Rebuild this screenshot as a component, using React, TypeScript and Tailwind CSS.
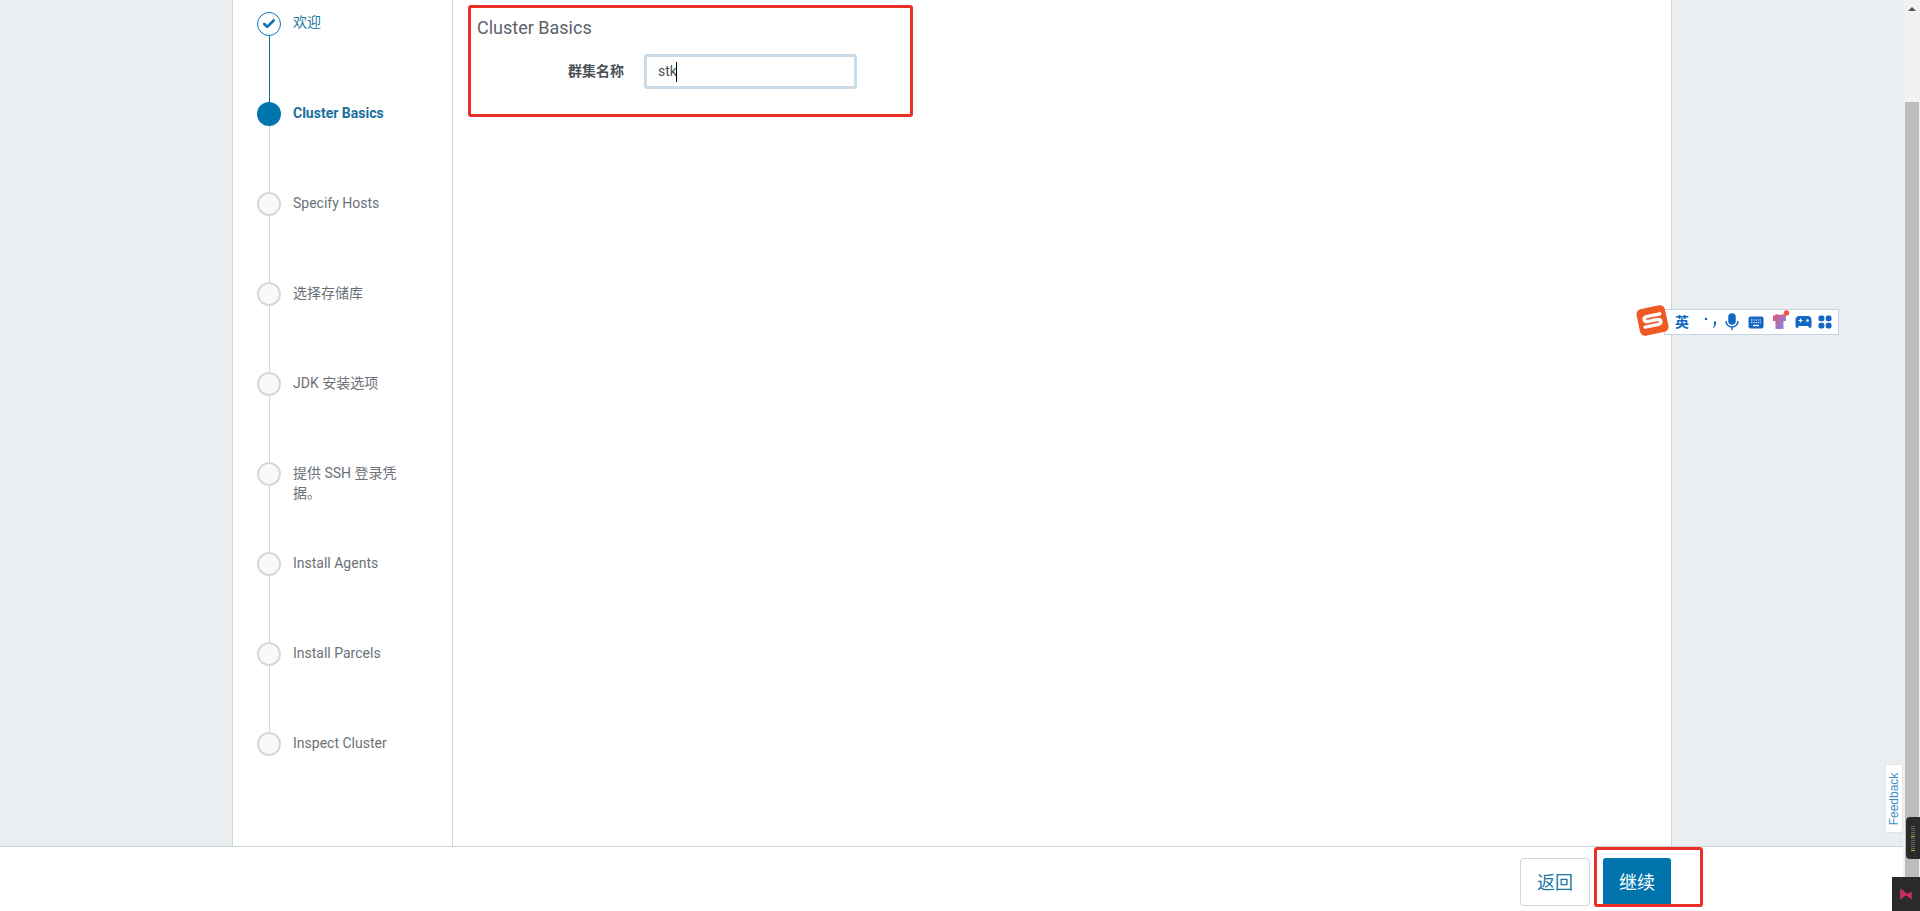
import React from 'react'
import { Check } from 'lucide-react'

const steps = [
  'Specify Hosts',
  '选择存储库',
  'JDK 安装选项',
  '提供 SSH 登录凭据。',
  'Install Agents',
  'Install Parcels',
  'Inspect Cluster',
]

const font = "font-['Roboto','Noto_Sans_CJK_SC',sans-serif]"

const SogouBar: React.FC = () => (
  <div className="absolute left-[1638px] top-[305px] flex h-[30px] items-center">
    <div className="z-10 flex h-[27px] w-[29px] -rotate-12 items-center justify-center rounded-[5px] bg-[#ef5a24]">
      <svg width="23" height="17" viewBox="0 0 23 17">
        <path d="M20 3.5H7.5Q3.5 3.5 3.5 6T7.5 8.500H15.500Q19.500 8.500 19.500 11T15.500 13.500H3" fill="none" stroke="#fff" strokeWidth="3.400" strokeLinecap="round" />
      </svg>
    </div>
    <div className="-ml-[3px] mt-[4px] flex h-[26px] w-[175px] items-center border border-[#c5d3e3] bg-white pl-[10px] text-[#1268c4]">
      <span className="w-[26px] text-[14px] leading-none font-bold">英</span>
      <svg className="ml-[2px]" width="14" height="14" viewBox="0 0 14 14" fill="#1268c4">
        <circle cx="3" cy="4" r="1.300" />
        <path d="M11 6.500h2.300q0 4-2.500 6.500l-.8-.5q1.300-1.700 1.300-3.500H11z" />
      </svg>
      <svg className="ml-[7px]" width="16" height="18" viewBox="0 0 16 18" fill="none" stroke="#1268c4" strokeWidth="1.500">
        <rect x="5" y="1" width="6" height="10" rx="3" fill="#1268c4" />
        <path d="M2 8a6 6 0 0 0 12 0M8 14v3" />
      </svg>
      <svg className="ml-[8px]" width="16" height="13" viewBox="0 0 16 13">
        <rect x="0.500" y="0.500" width="15" height="12" rx="2" fill="#1268c4" />
        <path d="M3 4h10M3 6.500h10" stroke="#fff" strokeWidth="1.200" strokeDasharray="1.300 1" />
        <path d="M5 9.500h6" stroke="#fff" strokeWidth="1.300" />
      </svg>
      <svg className="ml-[8px] -mt-[5px]" width="18" height="20" viewBox="0 0 18 20">
        <defs>
          <linearGradient id="shirt" x1="0" y1="0" x2="1" y2="1">
            <stop offset="0" stopColor="#e0566f" />
            <stop offset="1" stopColor="#7b8cf5" />
          </linearGradient>
        </defs>
        <path d="M1 6l4-2q3 2 6 0l3 2v5h-2.500v8h-8v-8H1z" fill="url(#shirt)" />
        <circle cx="14.500" cy="3" r="2.800" fill="#ef5a45" />
      </svg>
      <svg className="ml-[5px]" width="17" height="14" viewBox="0 0 17 14">
        <path d="M4 1h9q3.500 0 3.500 4.500V11q0 2-1.500 2-1 0-2-2H4q-1 2-2 2-1.500 0-1.500-2V5.500Q.5 1 4 1z" fill="#1268c4" />
        <path d="M3.500 5.500h4M5.500 3.500v4" stroke="#fff" strokeWidth="1.200" />
        <circle cx="12.500" cy="5.500" r="1.300" fill="#fff" />
      </svg>
      <svg className="ml-[6px]" width="14" height="14" viewBox="0 0 14 14" fill="#1268c4">
        <rect x="0.500" y="0.500" width="5.800" height="5.800" rx="2" />
        <rect x="7.700" y="0.500" width="5.800" height="5.800" rx="2" />
        <rect x="0.500" y="7.700" width="5.800" height="5.800" rx="2" />
        <rect x="7.700" y="7.700" width="5.800" height="5.800" rx="2" />
      </svg>
    </div>
  </div>
)

const App: React.FC = () => {
  return (
    <div className={`relative flex h-screen overflow-hidden bg-white ${font}`}>
      <div className="flex min-w-0 flex-1 flex-col">
        {/* Wizard body */}
        <div className="flex min-h-0 flex-1 bg-[#eaeef1] pl-[232px] pr-[231px]">
          <div className="flex flex-1 border-x border-[#cfd4d9] bg-white">
            <div className="w-[220px] shrink-0 border-r border-[#cfd4d9] pl-[24px] pt-[12px]">
              <div className="flex h-[90px]">
                <div className="flex w-[24px] flex-col items-center">
                  <div className="flex h-[24px] w-[24px] items-center justify-center rounded-full border border-[#0b76b0] bg-white">
                    <Check size={14} strokeWidth={4.5} className="text-[#0b76b0]" />
                  </div>
                  <div className="w-px flex-1 bg-[#0a6ea6]" />
                </div>
                <div className="ml-[12px] text-[14px] leading-[20px] text-[#1f77a5]">欢迎</div>
              </div>
              <div className="flex h-[90px]">
                <div className="flex w-[24px] flex-col items-center">
                  <div className="h-[24px] w-[24px] rounded-full bg-[#0075ad]" />
                  <div className="w-px flex-1 bg-[#cfd4d9]" />
                </div>
                <div className="ml-[12px] pt-[1px] text-[14px] leading-[20px] font-bold text-[#1a6f9e]">Cluster Basics</div>
              </div>
              {steps.map((step, i) => (
                <div key={step} className="flex h-[90px]">
                  <div className="flex w-[24px] flex-col items-center">
                    <div className="h-[24px] w-[24px] shrink-0 rounded-full border-2 border-[#d5d9dd] bg-[#f7f9fb]" />
                    {i < steps.length - 1 && <div className="w-px flex-1 bg-[#cfd4d9]" />}
                  </div>
                  <div className="ml-[12px] w-[110px] pt-[1px] text-[14px] leading-[20px] text-[#6b7177]">{step}</div>
                </div>
              ))}
            </div>

            <div className="flex-1 pl-[24px] pt-[16px]">
              <h2 className="text-[18px] leading-[24px] text-[#5c6268]">Cluster Basics</h2>
              <div className="mt-[14px] flex items-center">
                <label className="w-[167px] pr-[20px] text-right text-[14px] font-bold text-[#4a4f55]">群集名称</label>
                <div className="flex h-[35px] w-[213px] items-center rounded-[3px] border-[3px] border-[#c9dbe6] bg-white pl-[11px] text-[14px] text-[#4a4f55]">
                  stk<span className="-ml-[1px] h-[20px] w-px bg-black" />
                </div>
              </div>
            </div>
          </div>
        </div>

        {/* Footer buttons */}
        <div className="flex h-[65px] shrink-0 items-start justify-end gap-[13px] border-t border-[#cfd4d9] bg-white pr-[232px] pt-[11px]">
          <button className="h-[48px] w-[70px] rounded-[4px] border border-[#cfd4d9] bg-white text-[18px] text-[#1f77a5]">返回</button>
          <button className="h-[48px] w-[68px] rounded-[3px] bg-[#0075ad] text-[18px] text-white">继续</button>
        </div>
      </div>

      {/* Scrollbar */}
      <div className="flex w-[17px] shrink-0 flex-col items-center bg-[#f1f1f1] pt-[7px]">
        <div className="h-0 w-0 border-x-[4px] border-b-[4px] border-x-transparent border-b-[#505050]" />
        <div className="mt-[91px] h-[775px] w-[14px] bg-[#bcbcbc]" />
      </div>

      {/* Annotations */}
      <div className="absolute left-[468px] top-[5px] h-[112px] w-[445px] rounded-[3px] border-[3px] border-[#ea3026]" />
      <div className="absolute left-[1594px] top-[847px] h-[60px] w-[109px] rounded-[3px] border-[3px] border-[#ea3026]" />

      <SogouBar />

      {/* Feedback tab */}
      <div className="absolute left-[1885px] top-[764px] flex h-[69px] w-[18px] items-center justify-center border border-[#e3e6e9] bg-white pl-[1px]">
        <span className="-rotate-90 font-['Liberation_Sans',sans-serif] text-[12px] text-[#3a8fc4]">Feedback</span>
      </div>

      {/* Meter widget */}
      <div className="absolute left-[1906px] top-[817px] flex h-[42px] w-[14px] flex-col items-center justify-center gap-[1px] rounded-l-[4px] bg-[#2b2b2b]">
        {['#666', '#666', '#666', '#666', '#666', '#e0a040', '#666', '#666', '#666', '#666', '#666', '#666', '#8fd040'].map((c, i) => (
          <div key={i} className="h-[1px] w-[4px]" style={{ backgroundColor: c }} />
        ))}
      </div>

      {/* Corner widget */}
      <div className="absolute left-[1892px] top-[877px] flex h-[34px] w-[28px] items-center justify-center bg-[#2a2a2a]">
        <svg width="14" height="14" viewBox="0 0 12 12" fill="#c92f5c">
          <path d="M1 1l5 4v2l-5 4zM11 4v7L6 7V6z" />
        </svg>
      </div>
    </div>
  )
}

export default App
